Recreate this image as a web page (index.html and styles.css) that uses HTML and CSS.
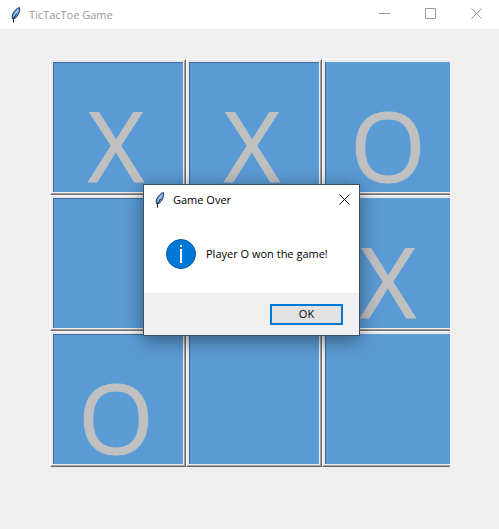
FILE: index.html
```html
<!DOCTYPE html>
<html lang="en">
<head>
<meta charset="utf-8">
<meta name="viewport" content="width=device-width, initial-scale=1">
<title>TicTacToe Game</title>
<link rel="stylesheet" href="styles.css">
</head>
<body>
<svg width="0" height="0" class="defs" aria-hidden="true">
  <symbol id="feather" viewBox="0 0 16 16">
    <path d="M11.500 .6C9 1 6.500 3.500 5 6.500C4 8.500 4 10.500 4.700 12C6.500 12 8.800 10.500 10 7.800C11.500 5.300 12 2.500 11.500 .6Z" fill="#5b9cf0" stroke="#1b2530" stroke-width=".9"/>
    <path d="M10.500 2.500C8.500 4.500 7 7 5.800 9.500" fill="none" stroke="#a9d1fa" stroke-width="1.200"/>
    <path d="M8.500 7C7 9 5.800 11 5.500 12.500V15.500" fill="none" stroke="#111820" stroke-width="1"/>
  </symbol>
</svg>
<header class="titlebar">
  <svg class="feather" aria-hidden="true"><use href="#feather"/></svg>
  <h1 class="title">TicTacToe Game</h1>
  <button class="control" aria-label="Minimize"><svg viewBox="0 0 11 11"><path d="M0 5.500H11"/></svg></button>
  <button class="control" aria-label="Maximize"><svg viewBox="0 0 11 11"><path d="M.5 .5H10.500V10.500H.5Z"/></svg></button>
  <button class="control" aria-label="Close"><svg viewBox="0 0 11 11"><path d="M.5 .5L10.500 10.500M10.500 .5L.5 10.500"/></svg></button>
</header>
<main class="board">
  <button class="cell"><span class="face">X</span></button>
  <button class="cell"><span class="face">X</span></button>
  <button class="cell"><span class="face">O</span></button>
  <button class="cell" aria-label="Empty"><span class="face"></span></button>
  <button class="cell"><span class="face">O</span></button>
  <button class="cell"><span class="face">X</span></button>
  <button class="cell"><span class="face">O</span></button>
  <button class="cell" aria-label="Empty"><span class="face"></span></button>
  <button class="cell" aria-label="Empty"><span class="face"></span></button>
</main>
<section class="dialog" role="dialog" aria-labelledby="dialog-title">
  <div class="titlebar dialog-bar">
    <svg class="feather" aria-hidden="true"><use href="#feather"/></svg>
    <h2 class="title" id="dialog-title">Game Over</h2>
    <button class="control" aria-label="Close dialog"><svg viewBox="0 0 11 11"><path d="M.5 .5L10.500 10.500M10.500 .5L.5 10.500"/></svg></button>
  </div>
  <div class="message">
    <svg class="info" viewBox="0 0 30 30" aria-hidden="true">
      <circle cx="15" cy="15" r="14.500" fill="#0078d7" stroke="#075a9e"/>
      <path d="M14 6H16V8H14ZM14 10H16V24H14Z" fill="#fff"/>
    </svg>
    <p>Player O won the game!</p>
  </div>
  <div class="actions"><button class="ok">OK</button></div>
</section>
</body>
</html>
```
FILE: styles.css
```css
* { box-sizing: border-box; }

body {
  margin: 0;
  min-height: 100vh;
  background: #efefef;
  color: #000;
  font: 11px/16px "Open Sans", "Noto Sans", sans-serif;
}

button {
  margin: 0;
  padding: 0;
  border: 0;
  border-radius: 0;
  background: none;
  color: inherit;
  font: inherit;
}

.defs { position: absolute; }

.titlebar {
  display: flex;
  align-items: center;
  height: 29px;
  padding-left: 8px;
  background: #fff;
  color: #999;
}

.feather {
  width: 16px;
  height: 16px;
  margin-right: 5px;
}

.title {
  flex: 1;
  margin: 0;
  font-size: 11px;
  font-weight: 400;
}

.control {
  display: flex;
  align-items: center;
  justify-content: center;
  width: 46px;
  height: 27px;
  align-self: flex-start;
}

.control svg {
  width: 11px;
  height: 11px;
  fill: none;
  stroke: currentColor;
}

.board {
  display: grid;
  grid-template-columns: 17fr 17fr 16fr;
  grid-auto-rows: 136px;
  margin: 30px 49px 0 50px;
}

.cell {
  min-width: 0;
  border: 1px solid;
  border-color: #fff #696969 #696969 #fff;
}

.face {
  display: block;
  height: 134px;
  padding: 15px 4px 0 0;
  border: 1px solid;
  border-color: #e3e3e3 #a0a0a0 #a0a0a0 #e3e3e3;
  background: #5b9bd5;
  box-shadow: inset 0 0 0 1px #f0f0f0, inset 2px 2px 0 #3f6792;
  color: #c0c0c0;
  font-size: 97px;
  line-height: 136px;
  text-align: center;
  -webkit-text-stroke: 1px #c0c0c0;
}

.cell:nth-child(3n) { border-right: 0; }

.cell:nth-child(3n) .face {
  padding: 15px 0 0 2px;
  border-right: 0;
  box-shadow: inset 1px 1px 0 #f0f0f0, inset 0 -1px 0 #f0f0f0, inset 2px 1px 0 #3f6792;
}

.dialog {
  position: absolute;
  top: 184px;
  left: 143px;
  width: 217px;
  border: 1px solid #3c4f61;
  background: #fff;
  box-shadow: 0 4px 18px rgba(0, 0, 0, .45);
}

.dialog-bar { color: #000; }

.dialog-bar .control {
  width: 30px;
  height: 29px;
}

.message {
  display: flex;
  align-items: center;
  gap: 10px;
  height: 79px;
  padding-left: 22px;
}

.message p { margin: 0; }

.info {
  width: 30px;
  height: 30px;
}

.actions {
  display: flex;
  align-items: center;
  justify-content: flex-end;
  height: 42px;
  padding-right: 16px;
  background: #efefef;
}

.ok {
  width: 73px;
  height: 21px;
  border: 2px solid #0078d7;
  background: #e1e1e1;
}
```
